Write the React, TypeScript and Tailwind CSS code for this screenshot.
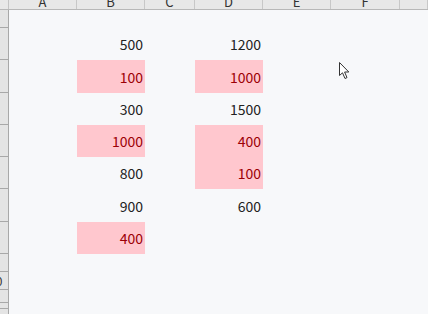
const columns = [
  { key: 'A', width: 'w-[68px]' },
  { key: 'B', width: 'w-[68px]' },
  { key: 'C', width: 'w-[50px]' },
  { key: 'D', width: 'w-[68px]' },
  { key: 'E', width: 'w-[68px]' },
  { key: 'F', width: 'w-[69px]' },
  { key: '', width: 'w-[28px]' },
];

interface Cell {
  value: string;
  flagged?: boolean;
}

interface Row {
  height: string;
  b?: Cell;
  d?: Cell;
}

const rows: Row[] = [
  { height: 'h-[18px]' },
  { height: 'h-[32px]', b: { value: '500' }, d: { value: '1200' } },
  { height: 'h-[33px]', b: { value: '100', flagged: true }, d: { value: '1000', flagged: true } },
  { height: 'h-[32px]', b: { value: '300' }, d: { value: '1500' } },
  { height: 'h-[32px]', b: { value: '1000', flagged: true }, d: { value: '400', flagged: true } },
  { height: 'h-[32px]', b: { value: '800' }, d: { value: '100', flagged: true } },
  { height: 'h-[33px]', b: { value: '900' }, d: { value: '600' } },
  { height: 'h-[32px]', b: { value: '400', flagged: true } },
  { height: 'h-[18px]' },
  { height: 'h-[18px]' },
  { height: 'h-[13px]' },
  { height: 'h-[6px]' },
  { height: 'h-[6px]' },
];

const font = "font-['Noto_Sans_CJK_JP','Noto_Sans',sans-serif]";

const ValueCell = ({ cell, width }: { cell?: Cell; width: string }) => (
  <div
    className={`${width} h-full flex items-center justify-end pr-[2px] text-[14px] leading-none ${
      cell?.flagged ? 'bg-[#ffc7ce] text-[#9c0006]' : 'text-[#222]'
    }`}
  >
    {cell?.value}
  </div>
);

export default function App() {
  return (
    <div className={`relative w-[428px] h-[314px] overflow-hidden bg-[#f7f8fa] ${font}`}>
      {/* Column header, scrolled so only the lower half of the letters shows */}
      <div className="flex h-[10px] bg-[#e8e8e8] border-b border-[#b8b8b8]">
        <div className="w-[9px] shrink-0 border-r border-[#c4c4c4]" />
        {columns.map((col, i) => (
          <div
            key={i}
            className={`${col.width} shrink-0 border-r border-[#c8c8c8] overflow-hidden flex justify-center`}
          >
            <span className="text-[13px] leading-[13px] -mt-[5px] text-[#333]">{col.key}</span>
          </div>
        ))}
      </div>

      <div className="flex">
        {/* Row header, too narrow for its numbers */}
        <div className="w-[9px] shrink-0 flex flex-col bg-[#e4e4e4] border-r border-[#a8a8a8]">
          {rows.map((row, i) => (
            <div
              key={i}
              className={`${row.height} shrink-0 border-b border-[#a8a8a8] overflow-hidden flex items-center justify-start`}
            >
              {i === 9 && (
                <span className="text-[12px] leading-none text-[#333] -ml-[11px]">10</span>
              )}
            </div>
          ))}
        </div>

        {/* Cells */}
        <div className="flex flex-col">
          {rows.map((row, i) => (
            <div key={i} className={`${row.height} shrink-0 flex`}>
              <div className="w-[68px]" />
              <ValueCell cell={row.b} width="w-[68px]" />
              <div className="w-[50px]" />
              <ValueCell cell={row.d} width="w-[68px]" />
            </div>
          ))}
        </div>
      </div>

      {/* Mouse pointer */}
      <svg
        className="absolute left-[339px] top-[62px]"
        width="12"
        height="18"
        viewBox="0 0 12 18"
      >
        <path
          d="M0.5 0.5 L0.5 13.5 L3.5 10.8 L6 16.5 L8 15.6 L5.6 10 L9.8 10 Z"
          fill="#fff"
          stroke="#333"
          strokeWidth="1"
          strokeLinejoin="round"
        />
      </svg>
    </div>
  );
}
